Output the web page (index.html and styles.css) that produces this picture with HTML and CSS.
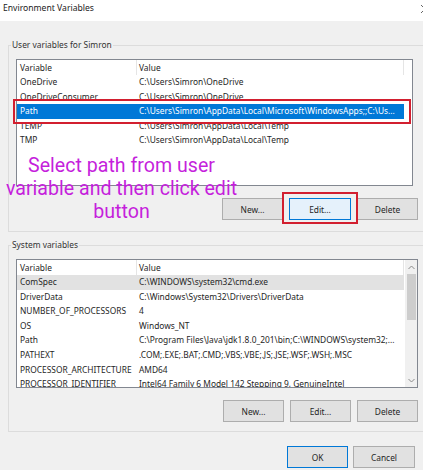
FILE: index.html
```html
<!DOCTYPE html>
<html lang="en">
<head>
<meta charset="utf-8">
<title>Environment Variables</title>
<link rel="stylesheet" href="styles.css">
</head>
<body>
<header class="titlebar">
  <span class="title">Environment Variables</span>
  <svg class="close" width="10" height="10" viewBox="0 0 10 10" aria-hidden="true">
    <path d="M1 1 L9 9 M9 1 L1 9" stroke="#666" stroke-width="1" fill="none"/>
  </svg>
</header>

<main class="dialog">
  <section class="group group-user">
    <div class="legend">User variables for Simron</div>
    <div class="list list-user">
      <div class="cols">
        <div class="row head"><span>Variable</span><span>Value</span></div>
        <div class="row"><span>OneDrive</span><span>C:\Users\Simron\OneDrive</span></div>
        <div class="row"><span>OneDriveConsumer</span><span>C:\Users\Simron\OneDrive</span></div>
        <div class="row sel marked"><span>Path</span><span>C:\Users\Simron\AppData\Local\Microsoft\WindowsApps;;C:\Us...</span></div>
        <div class="row"><span>TEMP</span><span>C:\Users\Simron\AppData\Local\Temp</span></div>
        <div class="row"><span>TMP</span><span>C:\Users\Simron\AppData\Local\Temp</span></div>
      </div>
    </div>
    <div class="btns">
      <button class="btn">New...</button>
      <span class="mark"><button class="btn btn-hot">Edit...</button></span>
      <button class="btn">Delete</button>
    </div>
  </section>

  <section class="group group-sys">
    <div class="legend">System variables</div>
    <div class="list list-sys">
      <div class="cols">
        <div class="row head"><span>Variable</span><span>Value</span></div>
        <div class="row hl"><span>ComSpec</span><span>C:\WINDOWS\system32\cmd.exe</span></div>
        <div class="row"><span>DriverData</span><span>C:\Windows\System32\Drivers\DriverData</span></div>
        <div class="row"><span>NUMBER_OF_PROCESSORS</span><span>4</span></div>
        <div class="row"><span>OS</span><span>Windows_NT</span></div>
        <div class="row"><span>Path</span><span>C:\Program Files\Java\jdk1.8.0_201\bin;C:\WINDOWS\system32;...</span></div>
        <div class="row"><span>PATHEXT</span><span>.COM;.EXE;.BAT;.CMD;.VBS;.VBE;.JS;.JSE;.WSF;.WSH;.MSC</span></div>
        <div class="row"><span>PROCESSOR_ARCHITECTURE</span><span>AMD64</span></div>
        <div class="row"><span>PROCESSOR_IDENTIFIER</span><span>Intel64 Family 6 Model 142 Stepping 9, GenuineIntel</span></div>
      </div>
      <div class="scroll">
        <div class="arrow">
          <svg width="7" height="5" viewBox="0 0 7 5" aria-hidden="true"><path d="M0.5 4 L3.5 1 L6.5 4" stroke="#8a8a8a" fill="none"/></svg>
        </div>
        <div class="thumb"></div>
        <div class="track"></div>
        <div class="arrow">
          <svg width="7" height="5" viewBox="0 0 7 5" aria-hidden="true"><path d="M0.5 1 L3.5 4 L6.5 1" stroke="#8a8a8a" fill="none"/></svg>
        </div>
      </div>
    </div>
    <div class="btns">
      <button class="btn">New...</button>
      <button class="btn">Edit...</button>
      <button class="btn">Delete</button>
    </div>
  </section>

  <div class="footer">
    <button class="btn btn-default">OK</button>
    <button class="btn btn-cancel">Cancel</button>
  </div>
</main>

<p class="note">Select path from user<br>variable and then click edit<br>button</p>
</body>
</html>
```

FILE: styles.css
```css
* { box-sizing: border-box; }

body {
  margin: 0;
  width: 423px;
  height: 470px;
  overflow: hidden;
  background: #f0f0f0;
  font-family: "Noto Sans", "Open Sans", sans-serif;
  font-size: 8.4px;
  color: #262626;
}

.titlebar {
  height: 21px;
  background: #ffffff;
  display: flex;
  justify-content: space-between;
  align-items: flex-start;
  padding: 2px 0 0 3px;
}

.title {
  font-size: 8.6px;
  line-height: 12px;
  color: #222;
}

.close {
  margin-top: 2px;
  margin-right: -7px;
}

.dialog {
  padding: 24px 0 0 8px;
}

.group {
  width: 417px;
  border: 1px solid #dcdcdc;
  padding: 0 6px 11px 7px;
}

.group-sys {
  margin-top: 13px;
  padding-bottom: 9px;
}

.legend {
  display: table;
  margin: -7px 0 0 -5px;
  padding: 0 1px;
  background: #f0f0f0;
  line-height: 12px;
  color: #333;
}

.list {
  margin-top: 8px;
  border: 1px solid #828790;
  background: #ffffff;
  display: flex;
}

.list-user {
  width: 397px;
  height: 127px;
}

.list-sys {
  width: 402px;
  height: 129px;
  overflow: hidden;
}

.cols {
  flex: 1;
  min-width: 0;
}

.row {
  display: grid;
  grid-template-columns: 120px 267px;
  width: 387px;
  height: 14.5px;
  line-height: 14.5px;
  white-space: nowrap;
}

.list-sys .row {
  height: 14.6px;
  line-height: 14.6px;
}

.row span {
  overflow: hidden;
  padding-left: 3px;
}

.row span + span {
  padding-left: 2px;
}

.list .head {
  height: 15px;
  line-height: 15px;
}

.head span {
  border-right: 1px solid #e5e5e5;
}

.sel {
  background: #0078d7;
  color: #ffffff;
}

.hl {
  background: #e2e2e2;
}

.marked {
  position: relative;
}

.marked::after {
  content: "";
  position: absolute;
  top: -5px;
  bottom: -5px;
  left: -4px;
  right: -7px;
  border: 2px solid #d21f2f;
}

.scroll {
  width: 12px;
  background: #f0f0f0;
  display: flex;
  flex-direction: column;
  align-items: center;
}

.arrow {
  height: 14px;
  display: flex;
  align-items: center;
  justify-content: center;
}

.thumb {
  width: 9px;
  height: 46px;
  background: #cdcdcd;
}

.track {
  flex: 1;
}

.btns {
  display: flex;
  justify-content: flex-end;
  gap: 6px;
  margin-top: 12px;
  width: 402px;
}

.btn {
  width: 61px;
  height: 22px;
  padding: 0;
  background: #e1e1e1;
  border: 1px solid #adadad;
  font: inherit;
  color: #262626;
}

.btn-hot {
  width: 62px;
  background: #e5f1fb;
  border-color: #0078d7;
}

.mark {
  position: relative;
  display: flex;
}

.mark::after {
  content: "";
  position: absolute;
  top: -6px;
  bottom: -4px;
  left: -7px;
  right: -7px;
  border: 2px solid #d21f2f;
}

.footer {
  display: flex;
  justify-content: flex-end;
  gap: 5px;
  margin-top: 14px;
  padding-right: 8px;
}

.btn-default {
  border-color: #0078d7;
}

.btn-cancel {
  width: 62px;
}

.note {
  position: absolute;
  left: 0;
  top: 154px;
  width: 243px;
  margin: 0;
  text-align: center;
  font-family: Roboto, "Noto Sans", sans-serif;
  font-size: 19.6px;
  line-height: 23px;
  color: #c51fdc;
}
```
